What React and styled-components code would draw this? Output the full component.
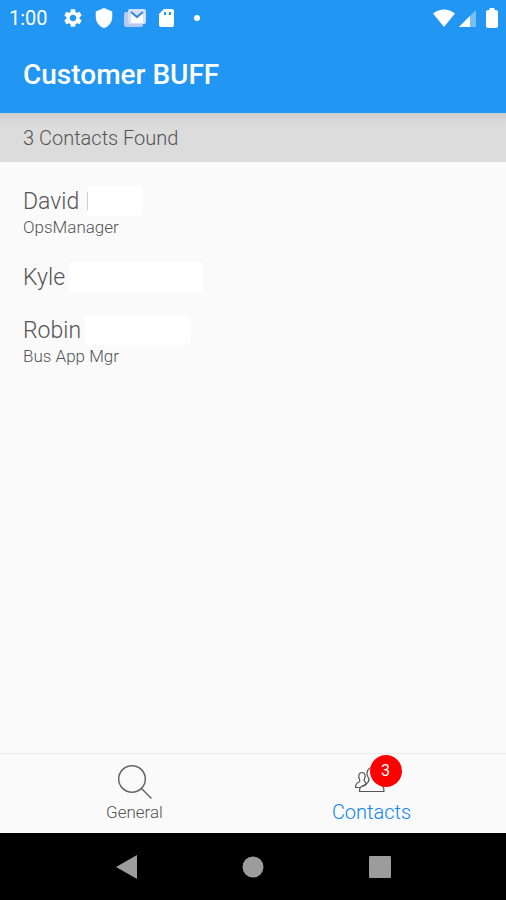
import React from 'react'
import styled, { createGlobalStyle } from 'styled-components'
import { MdSettings, MdShield } from 'react-icons/md'

const COLOR = {
  PRIMARY: '#2196f3',
  BACKGROUND: '#fafafa',
  TEXT: '#555',
  NAV: '#9c9c9c'
}

const GlobalStyle = createGlobalStyle`
  * {
    box-sizing: border-box;
  }
  body {
    margin: 0;
    font-family: Roboto, 'Liberation Sans', sans-serif;
    background: ${COLOR.BACKGROUND};
  }
  button {
    padding: 0;
    border: 0;
    background: none;
    font-family: inherit;
    cursor: pointer;
  }
  svg {
    display: block;
  }
`
const Screen = styled.div`
  display: flex;
  flex-direction: column;
  min-height: 100vh;
`
const StatusBar = styled.div`
  display: flex;
  align-items: center;
  justify-content: space-between;
  height: 36px;
  padding: 0 7px 0 9px;
  color: #fff;
  background: ${COLOR.PRIMARY};
`
const StatusGroup = styled.div`
  display: flex;
  align-items: center;
  gap: ${({ $gap }) => $gap}px;
`
const Clock = styled.span`
  width: 44px;
  font-size: 20px;
  font-weight: 400;
`
const AppBar = styled.header`
  display: flex;
  align-items: center;
  height: 77px;
  padding: 0 23px;
  background: ${COLOR.PRIMARY};
`
const Title = styled.h1`
  margin: 0;
  color: #fff;
  font-size: 28px;
  font-weight: 500;
`
const Banner = styled.div`
  display: flex;
  align-items: center;
  height: 49px;
  padding: 0 23px;
  color: ${COLOR.TEXT};
  font-size: 20px;
  font-weight: 300;
  background: linear-gradient(#cfcfcf, #dcdcdc 12px);
`
const Main = styled.main`
  flex: 1;
`
const ContactList = styled.ul`
  display: flex;
  flex-direction: column;
  gap: 23px;
  margin: 0;
  padding: 24px 23px;
  list-style: none;
  color: ${COLOR.TEXT};
  font-weight: 300;
`
const Name = styled.div`
  display: flex;
  align-items: center;
  gap: 4px;
  height: 30px;
  font-size: 23px;
`
const Hidden = styled.span`
  width: ${({ $width }) => $width}px;
  height: 30px;
  margin-left: ${({ $edge }) => ($edge ? 4 : 0)}px;
  border-radius: 4px;
  background: ${({ $edge }) =>
    $edge
      ? 'linear-gradient(#ccc, #ccc) 0 center / 1px 18px no-repeat, #fff'
      : '#fff'};
`
const Role = styled.div`
  height: 23px;
  font-size: 17px;
  line-height: 23px;
`
const TabBar = styled.nav`
  display: flex;
  height: 80px;
  padding: 0 16px;
  border-top: 1px solid #ececec;
  background: ${COLOR.BACKGROUND};
`
const Tab = styled.button`
  display: flex;
  flex: 1;
  flex-direction: column;
  align-items: center;
  padding-top: 10px;
  color: ${({ $active }) => ($active ? '#0f86ea' : COLOR.TEXT)};
  font-size: ${({ $active }) => ($active ? 20 : 17)}px;
  font-weight: 300;
  line-height: 24px;
`
const TabIcon = styled.span`
  position: relative;
  height: 36px;
`
const Badge = styled.span`
  position: absolute;
  top: -9px;
  left: 16px;
  width: 32px;
  height: 32px;
  border-radius: 50%;
  color: #fff;
  font-size: 16px;
  font-weight: 400;
  line-height: 32px;
  text-align: center;
  background: #f00;
`
const SystemBar = styled.div`
  display: flex;
  justify-content: center;
  height: 67px;
  background: #000;
`
const SystemButton = styled.button`
  display: flex;
  align-items: center;
  justify-content: center;
  width: 25%;
  color: ${COLOR.NAV};
`

const MailStackIcon = () => (
  <svg width='22' height='20' viewBox='0 0 22 20'>
    <path d='M0 6a2 2 0 0 1 2-2h3v11h14v2a2 2 0 0 1-2 2H2a2 2 0 0 1-2-2z' fill='#b5c9f4' />
    <rect x='4' y='1' width='18' height='15' rx='2' fill='#d3defa' />
    <path d='M7 4l6 5 6-5v11H7z' fill='#fff' />
    <path d='M7 4l6 5 6-5' fill='none' stroke='#2f83dc' strokeWidth='1.800' />
  </svg>
)

const SdCardIcon = () => (
  <svg width='22' height='22' viewBox='0 0 22 22'>
    <path
      d='M9 2h8a2 2 0 0 1 2 2v14a2 2 0 0 1-2 2H6a2 2 0 0 1-2-2V7z'
      fill='#fff'
    />
    <path d='M9 5h2v3H9zM14 5h2v3h-2z' fill={COLOR.PRIMARY} />
  </svg>
)

const WifiIcon = () => (
  <svg width='24' height='20' viewBox='0 0 24 20'>
    <path d='M1 5.500Q12-2.500 23 5.500L12 19z' fill='#fff' />
  </svg>
)

const SignalIcon = () => (
  <svg width='18' height='20' viewBox='0 0 18 20'>
    <path d='M0 19L17 2v17z' fill='#fff' opacity='.4' />
    <path d='M0 19L11 8v11z' fill='#fff' />
  </svg>
)

const BatteryIcon = () => (
  <svg width='14' height='22' viewBox='0 0 14 22'>
    <path
      d='M4.500 1h5v2H11a2 2 0 0 1 2 2v14a2 2 0 0 1-2 2H3a2 2 0 0 1-2-2V5a2 2 0 0 1 2-2h1.500z'
      fill='#fff'
    />
  </svg>
)

const SearchIcon = () => (
  <svg
    width='36'
    height='36'
    viewBox='0 0 36 36'
    fill='none'
    stroke='#666'
    strokeWidth='1.500'
  >
    <circle cx='15' cy='15' r='13.300' />
    <path d='M24.500 24.500l10 10' />
  </svg>
)

const PeopleIcon = () => (
  <svg
    width='36'
    height='36'
    viewBox='0 0 36 36'
    fill='none'
    stroke='#555'
    strokeWidth='1.200'
    strokeLinejoin='round'
  >
    <path d='M5.800 23.500H1.500c0-3.500 1-4.500 3.500-5.500 1-.6 1-1.600.5-2.700C3.800 11.500 5 8.500 8 8.500s4 3 2.400 6.500c-.6 1.200-.5 2 .3 2.600 1.300.8 1.700 1.400 1.500 2.800-1.500 1-2.700 1.600-4.200 2.100' />
    <path d='M5.500 27.500H30c0-6-2-7-8-10-1-1.200-1-2.500 0-4 3-5 1-10-3.500-10s-7 5-4.500 9.500c1 1.500 1.500 3 .5 4.500-1 2-2.500 3-5 4-3 1.200-4 2-4 6z' />
  </svg>
)

const contacts = [
  { name: 'David', role: 'OpsManager', hidden: 56, edge: true },
  { name: 'Kyle', hidden: 134 },
  { name: 'Robin', role: 'Bus App Mgr', hidden: 106 }
]

const Contact = ({ name, role, hidden, edge }) => (
  <li>
    <Name>
      {name}
      <Hidden $width={hidden} $edge={edge} />
    </Name>
    {!!role && <Role>{role}</Role>}
  </li>
)

export default () => (
  <Screen>
    <GlobalStyle />
    <StatusBar>
      <StatusGroup $gap={9}>
        <Clock>1:00</Clock>
        <MdSettings size={22} />
        <MdShield size={22} />
        <MailStackIcon />
        <SdCardIcon />
        <svg width='22' height='22' viewBox='0 0 22 22'>
          <circle cx='11' cy='11' r='3' fill='#fff' />
        </svg>
      </StatusGroup>
      <StatusGroup $gap={3}>
        <WifiIcon />
        <StatusGroup $gap={8}>
          <SignalIcon />
          <BatteryIcon />
        </StatusGroup>
      </StatusGroup>
    </StatusBar>
    <AppBar>
      <Title>Customer BUFF</Title>
    </AppBar>
    <Banner>3 Contacts Found</Banner>
    <Main>
      <ContactList>
        {contacts.map(contact => (
          <Contact key={contact.name} {...contact} />
        ))}
      </ContactList>
    </Main>
    <TabBar>
      <Tab type='button'>
        <TabIcon>
          <SearchIcon />
        </TabIcon>
        General
      </Tab>
      <Tab type='button' $active>
        <TabIcon>
          <PeopleIcon />
          <Badge>3</Badge>
        </TabIcon>
        Contacts
      </Tab>
    </TabBar>
    <SystemBar>
      <SystemButton type='button' aria-label='Back'>
        <svg width='22' height='24' viewBox='0 0 22 24' fill='currentColor'>
          <path d='M0 12L21 0v24z' />
        </svg>
      </SystemButton>
      <SystemButton type='button' aria-label='Home'>
        <svg width='22' height='22' viewBox='0 0 22 22' fill='currentColor'>
          <circle cx='11' cy='11' r='10.500' />
        </svg>
      </SystemButton>
      <SystemButton type='button' aria-label='Recent apps'>
        <svg width='22' height='22' viewBox='0 0 22 22' fill='currentColor'>
          <rect width='22' height='22' rx='1' />
        </svg>
      </SystemButton>
    </SystemBar>
  </Screen>
)
